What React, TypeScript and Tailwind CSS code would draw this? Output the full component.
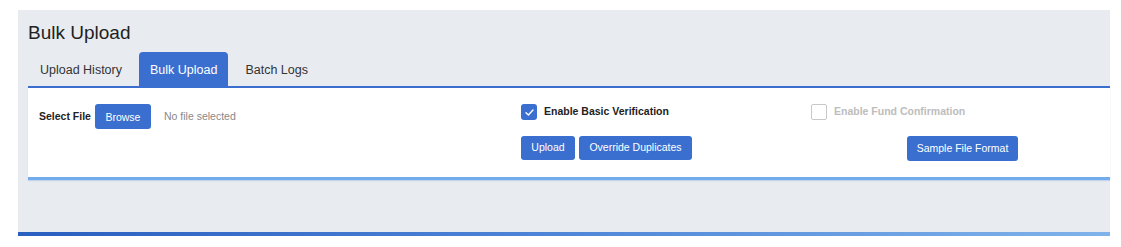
const tabs = ["Upload History", "Bulk Upload", "Batch Logs"];

const Checkbox = ({ checked, disabled }: { checked?: boolean; disabled?: boolean }) => (
  <span
    className={
      checked
        ? "flex h-[16px] w-[16px] items-center justify-center rounded-[3px] bg-[#3a6fd0]"
        : "flex h-[16px] w-[16px] items-center justify-center rounded-[2px] border border-[#c8c8c8] bg-white"
    }
    aria-disabled={disabled}
  >
    {checked && (
      <svg width="11" height="11" viewBox="0 0 12 12" fill="none">
        <path d="M2.2 6.3 L4.8 8.8 L9.8 3.2" stroke="#fff" strokeWidth="1.5" strokeLinecap="round" strokeLinejoin="round" />
      </svg>
    )}
  </span>
);

const App = () => {
  return (
    <div
      className="h-[247px] w-[1121px] bg-white pl-[18px] pt-[10px]"
      style={{ fontFamily: '"Liberation Sans", Arial, sans-serif' }}
    >
      <div className="flex h-[222px] w-[1092px] flex-col bg-[#e8ecf0] pl-[10px] pt-[12px]">
        <h1 className="text-[19px] leading-[22px] text-[#222]">Bulk Upload</h1>

        {/* Tabs */}
        <div className="mt-[8px] flex gap-[6px] pl-[1px]">
          {tabs.map((tab) => (
            <div
              key={tab}
              className={
                tab === "Bulk Upload"
                  ? "flex h-[34px] items-center rounded-t-[4px] bg-[#3a6fd0] px-[11px] pt-[2px] text-[12.5px] text-white"
                  : "flex h-[34px] items-center px-[11px] pt-[2px] text-[12.5px] text-[#333]"
              }
            >
              {tab}
            </div>
          ))}
        </div>

        {/* Upload card */}
        <div className="flex border-t-2 border-b-[3px] border-t-[#3a6fd0] border-b-[#72acec] bg-white pb-[16px] pl-[11px] pt-[16px] shadow-[0_1px_1px_rgba(90,140,210,0.25)]">
          <div className="flex w-[482px] items-start">
            <div className="flex h-[25px] items-center">
              <span className="text-[10.5px] font-bold text-[#222]">Select File</span>
              <button className="ml-[4px] flex h-[25px] w-[56px] items-center justify-center rounded-[3px] bg-[#3a6fd0] pt-[2px] text-[10.5px] text-white">
                Browse
              </button>
              <span className="ml-[13px] text-[10.5px] text-[#888]">No file selected</span>
            </div>
          </div>

          <div className="flex w-[290px] flex-col">
            <div className="flex h-[16px] items-center gap-[7px]">
              <Checkbox checked />
              <span className="text-[10.5px] font-bold text-[#222]">Enable Basic Verification</span>
            </div>
            <div className="mt-[16px] flex gap-[4px]">
              <button className="flex h-[24px] w-[54px] items-center justify-center rounded-[3px] bg-[#3a6fd0] text-[10.5px] text-white">
                Upload
              </button>
              <button className="flex h-[24px] w-[113px] items-center justify-center rounded-[3px] bg-[#3a6fd0] text-[10.5px] text-white">
                Override Duplicates
              </button>
            </div>
          </div>

          <div className="flex flex-1 flex-col">
            <div className="flex h-[16px] items-center gap-[7px]">
              <Checkbox disabled />
              <span className="text-[10.5px] font-bold text-[#bdbdbd]">Enable Fund Confirmation</span>
            </div>
            <div className="mt-[16px] flex justify-center pl-[4px]">
              <button className="flex h-[25px] w-[111px] items-center justify-center rounded-[3px] bg-[#3a6fd0] text-[10.5px] text-white">
                Sample File Format
              </button>
            </div>
          </div>
        </div>
      </div>
      <div className="h-[4px] w-[1092px] bg-gradient-to-r from-[#2a5ebf] via-[#4f86d8] to-[#80b3ea]" />
    </div>
  );
};

export default App;
